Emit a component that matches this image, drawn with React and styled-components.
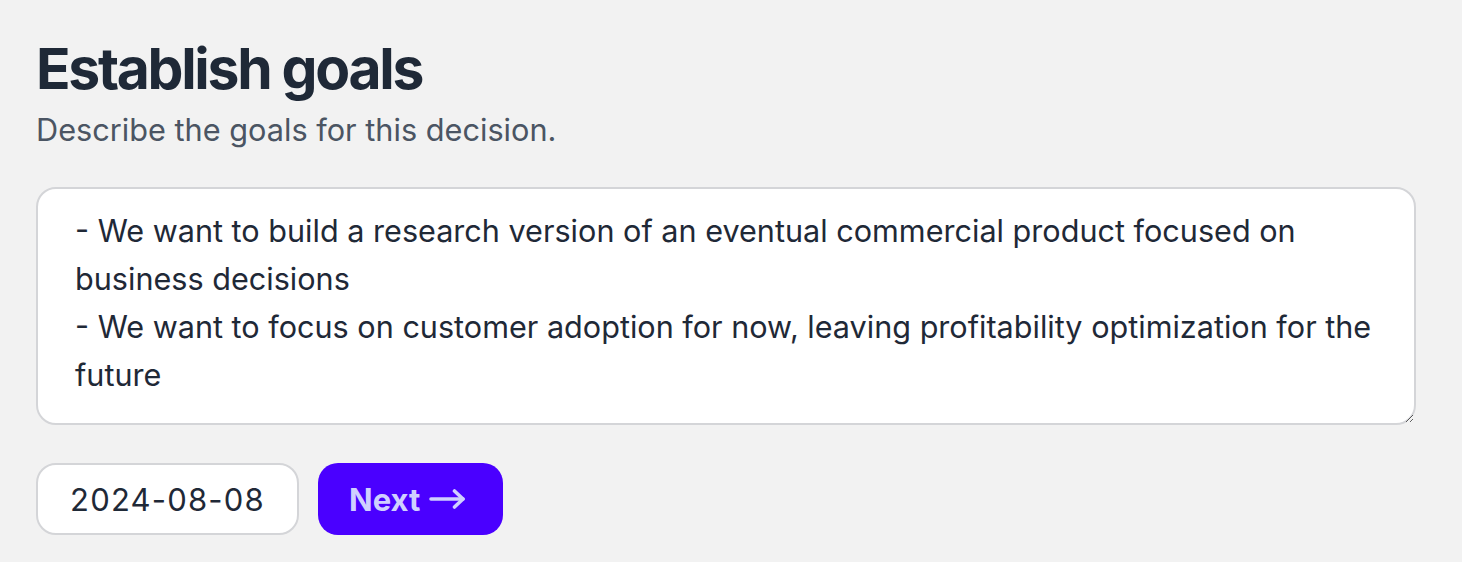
import styled, { createGlobalStyle } from "styled-components";

const GlobalStyle = createGlobalStyle`
  html, body {
    margin: 0;
    padding: 0;
    background: #f2f2f2;
    font-family: Inter, "Noto Sans", sans-serif;
    color: #1f2937;
  }
`;

const Page = styled.main`
  padding: 30px 46px 0 36px;
  min-height: 562px;
  box-sizing: border-box;
`;

const Title = styled.h1`
  margin: 0;
  font-size: 57px;
  line-height: 78px;
  font-weight: 700;
  letter-spacing: -2.3px;
  color: #1f2937;
`;

const Subtitle = styled.p`
  margin: 0;
  font-size: 30.7px;
  line-height: 44px;
  color: #4b5563;
`;

const GoalsInput = styled.textarea`
  display: block;
  box-sizing: border-box;
  width: 100%;
  height: 238px;
  margin-top: 35px;
  padding: 18px 30px 20px 37px;
  border: 2px solid #d4d5d8;
  border-radius: 20px;
  background: #fff;
  font-family: Inter, "Noto Sans", sans-serif;
  font-size: 30.6px;
  line-height: 48px;
  color: #1f2937;
  resize: vertical;
  outline: none;
`;

const Actions = styled.div`
  display: flex;
  gap: 19px;
  margin-top: 38px;
`;

const DateField = styled.input`
  box-sizing: border-box;
  width: 263px;
  height: 72px;
  padding: 0 20px;
  border: 2px solid #d4d5d8;
  border-radius: 20px;
  background: #fff;
  font-family: Inter, "Noto Sans", sans-serif;
  font-size: 31px;
  letter-spacing: 1.2px;
  text-align: center;
  color: #1f2937;
  outline: none;
`;

const NextButton = styled.button`
  display: flex;
  align-items: center;
  gap: 9px;
  box-sizing: border-box;
  height: 72px;
  padding: 0 38px 0 31px;
  border: none;
  border-radius: 20px;
  background: #4a00ff;
  color: #d0d0ff;
  font-family: Inter, "Noto Sans", sans-serif;
  font-size: 31px;
  font-weight: 700;
  cursor: pointer;
`;

const goals = `- We want to build a research version of an eventual commercial product focused on business decisions
- We want to focus on customer adoption for now, leaving profitability optimization for the future`;

const Arrow = () => (
  <svg width="36" height="20" viewBox="0 0 36 20" fill="none" stroke="currentColor" strokeWidth="3.6" strokeLinecap="round" strokeLinejoin="round">
    <path d="M2 10h32" />
    <path d="M25.5 2l8.5 8-8.5 8" />
  </svg>
);

const App = () => {
  return (
    <Page>
      <GlobalStyle />
      <Title>Establish goals</Title>
      <Subtitle>Describe the goals for this decision.</Subtitle>
      <GoalsInput defaultValue={goals} />
      <Actions>
        <DateField type="text" defaultValue="2024-08-08" />
        <NextButton>
          Next
          <Arrow />
        </NextButton>
      </Actions>
    </Page>
  );
};

export default App;
